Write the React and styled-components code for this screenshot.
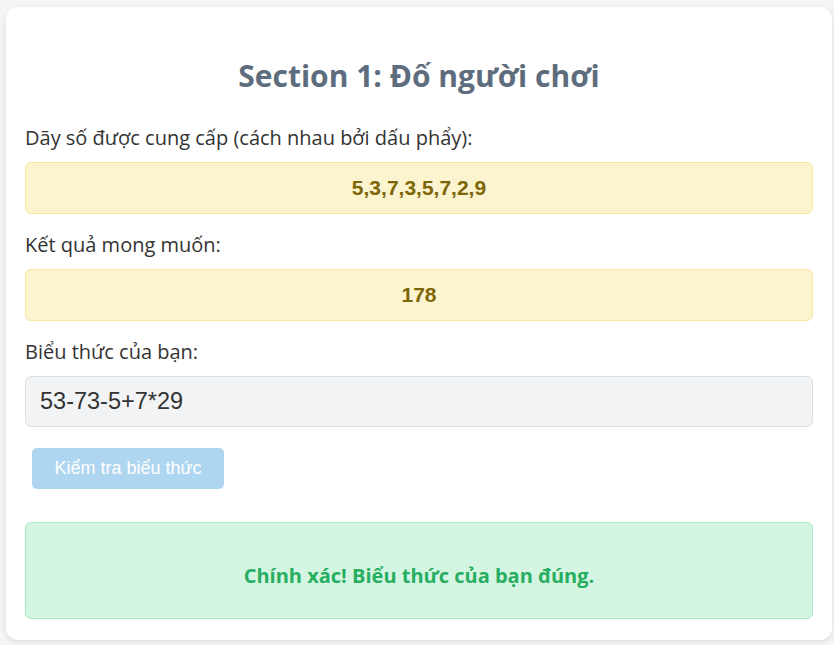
import React from "react";
import styled, { createGlobalStyle } from "styled-components";

const Global = createGlobalStyle`
  html, body { margin: 0; padding: 0; background: #f4f5f7; }
  body { font-family: "Open Sans", "Noto Sans", sans-serif; }
  * { box-sizing: border-box; }
`;

const Page = styled.div`
  padding: 7px 2px 5px 6px;
`;

const Card = styled.div`
  background: #ffffff;
  border-radius: 12px;
  box-shadow: 0 2px 6px rgba(0, 0, 0, 0.1);
  padding: 0 19px 21px 19px;
  height: 633px;
  display: flex;
  flex-direction: column;
`;

const Title = styled.h2`
  margin: 49px 0 28px;
  text-align: center;
  font-family: "Open Sans", "Noto Sans", sans-serif;
  font-size: 30px;
  line-height: 40px;
  font-weight: 700;
  color: #5d6d7e;
`;

const Label = styled.div`
  font-size: 20px;
  line-height: 27px;
  color: #333333;
  margin-bottom: 11px;
`;

const ValueBox = styled.div`
  height: 52px;
  display: flex;
  align-items: center;
  justify-content: center;
  background: #fcf3cf;
  border: 1px solid #f9e79f;
  border-radius: 6px;
  font-family: "Liberation Sans", Arial, sans-serif;
  font-weight: 700;
  font-size: 21px;
  color: #7d6608;
  margin-bottom: 17px;
`;

const Input = styled.input`
  height: 52px;
  width: 100%;
  background: #f2f3f4;
  border: 1px solid #dcdfe1;
  border-radius: 6px;
  padding: 0 14px;
  font-family: "Liberation Sans", Arial, sans-serif;
  font-size: 23.5px;
  color: #333333;
  outline: none;
`;

const ButtonRow = styled.div`
  padding: 21px 0 0 7px;
`;

const Button = styled.button`
  width: 192px;
  height: 41px;
  background: #aed6f1;
  color: #ffffff;
  border: none;
  border-radius: 5px;
  font-family: "Liberation Sans", Arial, sans-serif;
  font-size: 18px;
  cursor: not-allowed;
`;

const Result = styled.div`
  margin-top: 33px;
  height: 97px;
  display: flex;
  align-items: center;
  justify-content: center;
  background: #d5f5e3;
  border: 1px solid #abebc6;
  border-radius: 6px;
  font-family: "Open Sans", "Noto Sans", sans-serif;
  font-weight: 700;
  font-size: 20px;
  color: #27ae60;
  padding-top: 10px;
`;

export default function App() {
  return (
    <Page>
      <Global />
      <Card>
        <Title>Section 1: Đố người chơi</Title>
        <Label>Dãy số được cung cấp (cách nhau bởi dấu phẩy):</Label>
        <ValueBox>5,3,7,3,5,7,2,9</ValueBox>
        <Label>Kết quả mong muốn:</Label>
        <ValueBox>178</ValueBox>
        <Label>Biểu thức của bạn:</Label>
        <Input defaultValue="53-73-5+7*29" />
        <ButtonRow>
          <Button disabled>Kiểm tra biểu thức</Button>
        </ButtonRow>
        <Result>Chính xác! Biểu thức của bạn đúng.</Result>
      </Card>
    </Page>
  );
}
